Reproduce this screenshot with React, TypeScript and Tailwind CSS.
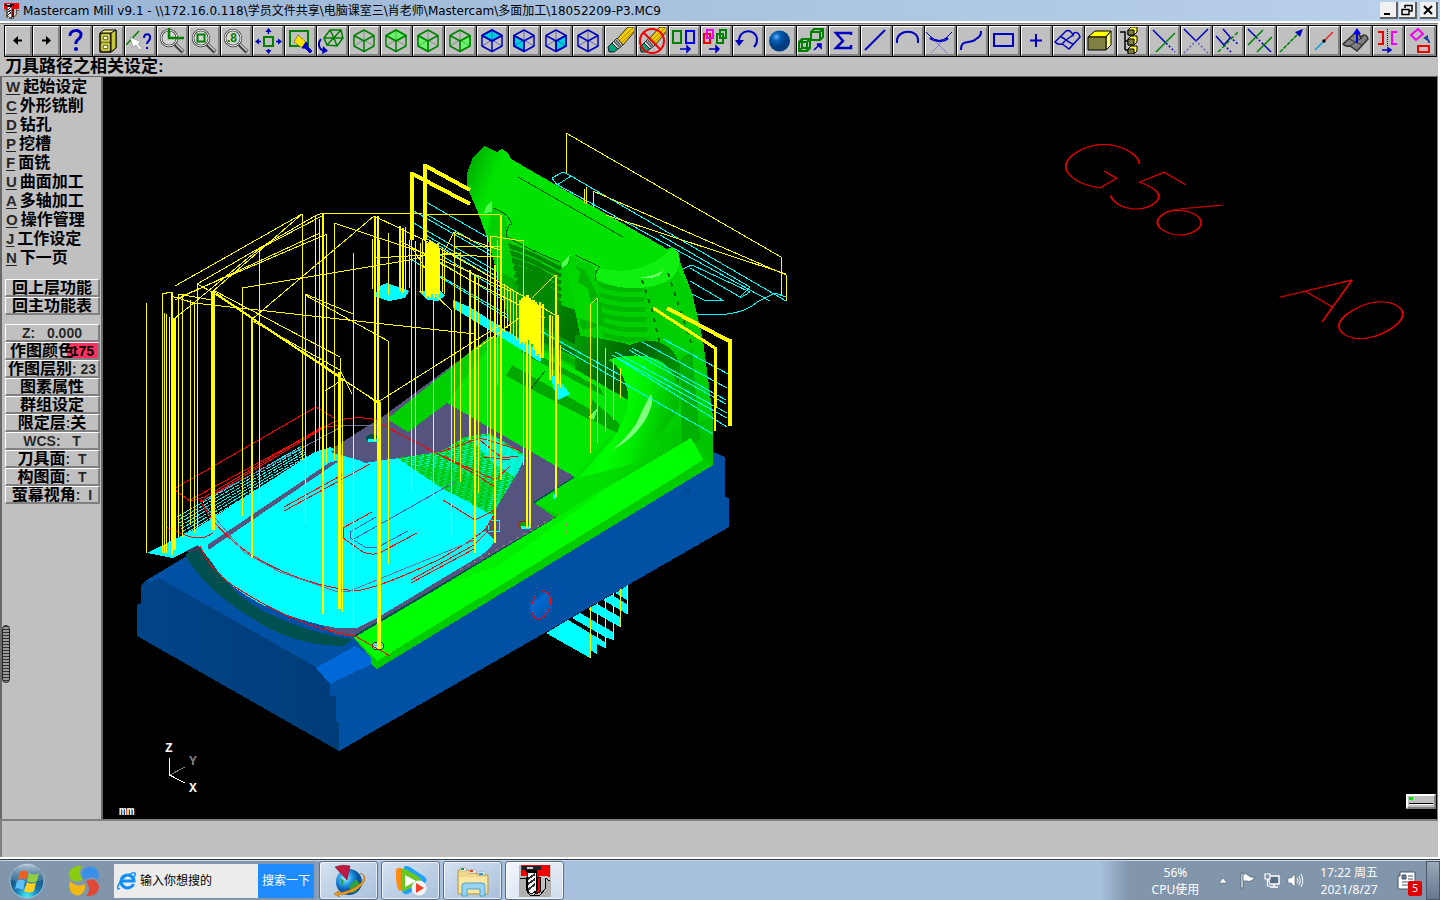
import type { ReactNode } from "react";

const CJK = "font-['Noto_Sans','Noto_Sans_CJK_SC',sans-serif]";
const BLUE = "#0000c0";
const GREEN = "#008000";

/* ---------- toolbar icons, drawn on a 31 x 30 grid ---------- */

function Cube({ color, face, fill }: { color: string; face?: "top" | "front" | "side"; fill?: string }) {
  const edge = face && color === GREEN ? "#20d020" : color;
  return (
    <g stroke={color} strokeWidth="1.5" fill="none" strokeLinejoin="round">
      {face === "top" && <path d="M15 4 25 9.500 15 15 5 9.500Z" fill={fill} stroke={edge} />}
      {face === "front" && <path d="M5 9.500 15 15V25L5 20Z" fill={fill} stroke={edge} />}
      {face === "side" && <path d="M25 9.500 15 15V25L25 20Z" fill={fill} stroke={edge} />}
      <path d="M5 20 15 14 25 20M15 5V14" strokeWidth="1" opacity=".45" />
      <path d="M15 4 25 9.500V20L15 25.500 5 20V9.500ZM5 9.500 15 15 25 9.500M15 15V25.500" />
    </g>
  );
}

function Lens({ children }: { children?: ReactNode }) {
  return (
    <g>
      <path d="M18 18 26 26" stroke="#404040" strokeWidth="4" />
      <path d="M18 17 26 25" stroke="#d8d8d8" strokeWidth="1.500" />
      <circle cx="12" cy="12" r="8" fill="#d6d6d6" stroke="#404040" strokeWidth="2.500" />
      <circle cx="12" cy="12" r="8" fill="none" stroke="#f4f4f4" strokeWidth="1" />
      {children}
    </g>
  );
}

function Eraser() {
  return (
    <g stroke="#000" strokeWidth=".8">
      <path d="M12 13 23 1H30V5L18 19Z" fill="#f8d000" />
      <path d="M14 15 28 2M16 17 30 4" stroke="#907000" fill="none" />
      <path d="M7 17 12 12 18 19 13 23Z" fill="#e0e0e0" />
      <path d="M9 15 15 22M11 14 16 20" fill="none" stroke="#555" strokeWidth="1.500" />
      <path d="M3 21 7 17 13 23 9 26H4Z" fill="#00a080" />
    </g>
  );
}

const Arrow = ({ d }: { d: string }) => <path d={d} fill={BLUE} stroke={BLUE} strokeWidth="1.500" />;

const ICONS: [string, ReactNode][] = [
  ["Help", <g key="a"><path d="M9 10C8 3 21 3 20 9 20 14 14 13 15 18" fill="none" stroke={BLUE} strokeWidth="3" /><circle cx="15" cy="23" r="2" fill={BLUE} /></g>],
  ["File", <g key="a" stroke="#000"><path d="M7 7 11 4H23V22L18 26H7Z" fill="#f4f080" /><path d="M7 7H18V26H7Z" fill="#808000" /><path d="M18 7V26L23 22V4Z" fill="#c8c840" /><path d="M9 9H16V15H9ZM9 18H16V24H9Z" fill="#808000" stroke="#f8f8a0" /><path d="M11 12H14M11 21H14" stroke="#fff" strokeWidth="2" /></g>],
  ["Analyze", <g key="a" fill="none"><path d="M1 19 14 5" stroke={GREEN} strokeWidth="1.500" /><path d="M5 11 16 16 13 18 17 22 15 24 11 19 8 21Z" fill="#fff" stroke="#777" strokeWidth=".5" /><path d="M19 12C19 7 26 7 25 12 25 15 22 15 22 18M22 21V23" stroke={BLUE} strokeWidth="2" /></g>],
  ["Zoom screen", <Lens key="a"><path d="M12 2V12H27" fill="none" stroke={GREEN} strokeWidth="2.500" /></Lens>],
  ["Zoom window", <Lens key="a"><path d="M8.500 8.500H15.500V15.500H8.500Z" fill="none" stroke={GREEN} strokeWidth="2" /></Lens>],
  ["Zoom 0.8", <Lens key="a"><text x="6" y="16" fontSize="12" fontWeight="700" fill={GREEN} fontFamily="Liberation Sans">.8</text></Lens>],
  ["Fit", <g key="a"><path d="M11 11H20V20H11Z" fill="none" stroke={GREEN} strokeWidth="2" /><path d="M15.500 8V5M15.500 23V26M8 15.500H5M23 15.500H26" stroke={BLUE} strokeWidth="1.500" /><path d="M12.500 6 15.500 2 18.500 6ZM12.500 24 15.500 28 18.500 24ZM6 12.500 2 15.500 6 18.500ZM25 12.500 29 15.500 25 18.500Z" fill={BLUE} /></g>],
  ["Repaint", <g key="a"><path d="M5 5H23V20H5Z" fill="none" stroke={GREEN} strokeWidth="2" /><path d="M13 9 22 17 17 22 9 16Z" fill="#f8e000" stroke="#605000" strokeDasharray="1 1" /><path d="M21 16 23 18 22 20 27 25 25 27 20 22 17 22Z" fill="#0000e0" stroke="#0000a0" /></g>],
  ["Rotate view", <g key="a" fill="none"><path d="M7 12 13 4 24 4 26 12 20 20 10 19ZM7 12 17 12 26 12M17 12 13 4M17 12 20 20M10 19 24 4" stroke={GREEN} strokeWidth="1.500" /><path d="M4 13C0 18 2 24 8 25" stroke={BLUE} strokeWidth="2" /><path d="M6 20 11 25 5 28Z" fill={BLUE} /></g>],
  ["View isometric", <Cube key="a" color={GREEN} />],
  ["View top", <Cube key="a" color={GREEN} face="top" fill="#70f070" />],
  ["View front", <Cube key="a" color={GREEN} face="front" fill="#70f070" />],
  ["View side", <Cube key="a" color={GREEN} face="side" fill="#70f070" />],
  ["Plane top", <Cube key="a" color={BLUE} face="top" fill="#00d0d8" />],
  ["Plane front", <Cube key="a" color={BLUE} face="front" fill="#00d0d8" />],
  ["Plane side", <Cube key="a" color={BLUE} face="side" fill="#00d0d8" />],
  ["Plane 3D", <Cube key="a" color={BLUE} />],
  ["Delete", <Eraser key="a" />],
  ["Undelete", <g key="a"><Eraser /><circle cx="15" cy="15" r="12" fill="none" stroke="#f00000" strokeWidth="2" /><path d="M7 7 23 23" stroke="#f00000" strokeWidth="2" /></g>],
  ["Clear colors", <g key="a" fill="none" strokeWidth="2"><path d="M4 5H12V17H4Z" stroke={GREEN} /><path d="M17 5H25V17H17Z" stroke="#0000ff" /><Arrow d="M11 23H18V20L21 23 18 26V23" /></g>],
  ["Screen attributes", <g key="a" fill="none" strokeWidth="2"><path d="M3 8H9V17H3Z" stroke="#f00000" /><path d="M6 4H12V12H6Z" stroke="#f000f0" /><path d="M16 8H22V17H16ZM19 4H25V12H19Z" stroke={GREEN} /><Arrow d="M8 23H15V20L18 23 15 26V23" /></g>],
  ["Undo", <g key="a"><path d="M6 16C5 2 24 2 24 14 24 17 23 19 21 21" fill="none" stroke={BLUE} strokeWidth="2" /><path d="M2 14H11L6 20Z" fill={BLUE} /></g>],
  ["Shade", <g key="a"><defs><radialGradient id="ball" cx=".35" cy=".3"><stop offset="0" stopColor="#60b0f0" /><stop offset=".4" stopColor="#0860b8" /><stop offset="1" stopColor="#003c80" /></radialGradient></defs><circle cx="14.500" cy="15" r="10.500" fill="url(#ball)" /></g>],
  ["Transform", <g key="a"><path d="M14 6 17 3H26V11L23 14H14ZM14 6H23L26 3M23 6V14M2 16 5 13H13V22L10 25H2ZM2 16H10L13 13M10 16V25M5 13V22H13M5 22 2 25" fill="none" stroke={GREEN} strokeWidth="2" /><Arrow d="M17 24 22 19 20 18H24V22L22 20" /></g>],
  ["Sum", <path key="a" d="M22 9V7H7L14 15 7 22H22V19" fill="none" stroke={BLUE} strokeWidth="2.500" />],
  ["Line", <path key="a" d="M4 24 24 4" stroke={BLUE} strokeWidth="2" />],
  ["Arc", <path key="a" d="M4 17V14C5 3 25 3 25 14V17" fill="none" stroke={BLUE} strokeWidth="2" />],
  ["Fillet", <g key="a" fill="none"><path d="M1 6 5 10 C11 16 18 16 23 10L27 6" stroke={BLUE} strokeWidth="1" /><path d="M5 12C11 16 18 16 23 12" stroke={BLUE} strokeWidth="2.500" /><path d="M6 27 21 12M22 27 7 12" stroke="#5050d0" strokeWidth=".8" strokeDasharray="2 1" /></g>],
  ["Spline", <path key="a" d="M4 24C4 12 13 19 19 13 24 10 24 8 24 5" fill="none" stroke={BLUE} strokeWidth="2" />],
  ["Rectangle", <path key="a" d="M5 8H24V20H5Z" fill="none" stroke={BLUE} strokeWidth="2" />],
  ["Point", <path key="a" d="M9 14.500H21M15 8V21" stroke={BLUE} strokeWidth="2" />],
  ["Surface", <path key="a" d="M2 16 13 5C17 3 19 7 20 9 21 5 26 6 27 11L16 23 12 20 9 18C6 19 4 18 2 16ZM8 11C12 12 14 16 20 18M13 14 20 9M9 18 13 14" fill="none" stroke={BLUE} strokeWidth="1.500" />],
  ["Solid", <g key="a" stroke="#000"><path d="M3 11 10 5H26L21 11Z" fill="#ffff00" /><path d="M21 11 26 5V19L21 24Z" fill="#ffff80" /><path d="M3 11H21V24H3Z" fill="#808040" /></g>],
  ["Solids manager", <g key="a" stroke="#000"><path d="M3 6H8V24M8 15H11M8 24H11" fill="none" strokeWidth="1.500" /><path d="M11 4 14 1H20V6L17 9H11ZM11 13 14 10H20V16L17 19H11ZM11 23 14 20H20V25L18 27H11Z" fill="#ffff40" /><path d="M11 4H17V9H11ZM11 13H17V19H11ZM11 23H17V28H11Z" fill="#808040" /></g>],
  ["Trim one", <g key="a" strokeWidth="1.500"><path d="M4 4 17 17" stroke={BLUE} /><path d="M17 17 26 26" stroke={BLUE} strokeDasharray="2 2" /><path d="M7 26 26 7" stroke={GREEN} /></g>],
  ["Trim two", <g key="a" fill="none" strokeWidth="1.500"><path d="M3 3 15 15 27 3" stroke={BLUE} /><path d="M3 27 15 15 27 27" stroke="#6060c0" strokeDasharray="2 2" /></g>],
  ["Trim three", <g key="a" fill="none" strokeWidth="1.500"><path d="M3 10 11 19 17 12M10 3 17 11" stroke={BLUE} /><path d="M11 19 19 27M17 11 26 19" stroke={BLUE} strokeDasharray="2 2" /><path d="M5 26 26 5" stroke={GREEN} strokeDasharray="4 2" /></g>],
  ["Divide", <g key="a" strokeWidth="1.500"><path d="M3 3 11 11M18 18 26 26" stroke={BLUE} /><path d="M11 11 18 18" stroke={BLUE} strokeDasharray="2 2" /><path d="M3 19 18 4M12 26 27 11" stroke={GREEN} /></g>],
  ["Extend", <g key="a"><path d="M3 26 21 8" stroke={GREEN} strokeWidth="1.500" strokeDasharray="4 1" /><path d="M18 6 26 3 23 11Z" fill={BLUE} /></g>],
  ["Break", <g key="a"><path d="M6 24 15 15" stroke="#00a0d8" strokeWidth="1.500" /><path d="M15 15 24 6" stroke="#f02020" strokeWidth="1.500" /><circle cx="15" cy="15" r="1.700" /></g>],
  ["Normal", <g key="a"><path d="M2 18 13 8C17 6 19 9 20 12 22 7 26 9 27 13L16 25 12 22 9 20C6 21 4 20 2 18Z" fill="#808080" stroke="#303030" strokeWidth="1.500" /><path d="M8 13 21 19M9 20 20 12" stroke="#303030" /><path d="M16 17V7" stroke="#0000f0" strokeWidth="2" /><path d="M12 8 16 2 20 8Z" fill="#0000f0" /></g>],
  ["Mirror", <g key="a" fill="none"><path d="M5 6H10V18H5" stroke="#f00000" strokeWidth="2" /><path d="M24 6H19V18H24" stroke="#f000f0" strokeWidth="2" /><path d="M14.500 3V20" stroke={BLUE} strokeWidth="1" strokeDasharray="1 1" /><Arrow d="M9 24H15V22L18 24 15 26V24" /></g>],
  ["Rotate", <g key="a" fill="none"><path d="M6 9 13 3 18 8 11 14Z" stroke="#f000f0" strokeWidth="2" /><path d="M13 20H24V26H13Z" stroke="#f00000" strokeWidth="2" /><path d="M24 17C24 14 22 12 20 12" stroke="#2040a0" strokeWidth="2" /><path d="M18 12 23 9V15Z" fill="#2040a0" /></g>],
];

function ToolButton({ label, wide, children }: { label: string; wide: boolean; children: ReactNode }) {
  return (
    <button
      aria-label={label}
      className={`h-[30px] shrink-0 overflow-hidden border-r-2 border-b-2 border-t border-l border-t-white border-l-white border-r-[#808080] border-b-[#808080] bg-[#c0c0c0] ${wide ? "w-[31px]" : "w-[27px]"}`}
    >
      {children}
    </button>
  );
}

function Toolbar() {
  return (
    <nav className="ml-1 mt-[2px] flex w-fit max-w-full gap-px overflow-hidden bg-black p-px">
      <ToolButton label="Previous" wide={false}>
        <svg viewBox="0 0 24 27" className="h-full w-full"><path d="M8 13.500H16" stroke="#000" strokeWidth="2" /><path d="M7 13.500 12 9V18Z" /></svg>
      </ToolButton>
      <ToolButton label="Next" wide={false}>
        <svg viewBox="0 0 24 27" className="h-full w-full"><path d="M8 13.500H16" stroke="#000" strokeWidth="2" /><path d="M17 13.500 12 9V18Z" /></svg>
      </ToolButton>
      {ICONS.map(([label, icon]) => (
        <ToolButton key={label} label={label} wide>
          <svg viewBox="1 1 28 27" className="h-full w-full">{icon}</svg>
        </ToolButton>
      ))}
    </nav>
  );
}

/* ---------- left menu ---------- */

const MENU = [
  ["W", "起始设定"], ["C", "外形铣削"], ["D", "钻孔"], ["P", "挖槽"], ["F", "面铣"],
  ["U", "曲面加工"], ["A", "多轴加工"], ["O", "操作管理"], ["J", "工作设定"], ["N", "下一页"],
];

const SETTINGS = ["Z:   0.000", "作图颜色:", "作图层别: 23", "图素属性", "群组设定", "限定层:关", "WCS:   T", "刀具面:  T", "构图面:  T", "萤幕视角:  I"];

/* Latin runs are set a size smaller than the Chinese ones */
function Mixed({ text }: { text: string }) {
  return (
    <>
      {text.split(/([\x20-\x7f]+)/).filter(Boolean).map((run) =>
        run.charCodeAt(0) < 128 ? <span key={run} className="text-[14px] font-bold opacity-80">{run}</span> : <span key={run}>{run}</span>,
      )}
    </>
  );
}

function MenuButton({ text }: { text: string }) {
  const colour = text === "作图颜色:";
  return (
    <button
      className={`relative flex h-[18px] w-full items-center overflow-hidden whitespace-pre border-r-2 border-b-2 border-t border-l border-t-white border-l-white border-r-[#808080] border-b-[#808080] text-[16px] leading-none ${colour ? "pl-1" : "justify-center"}`}
    >
      {colour && <span className="absolute right-0 top-0 flex h-full w-[31px] items-center justify-end bg-[#ff3060] pr-1 text-[14px]">175</span>}
      <span className="relative flex items-center">
        <Mixed text={text} />
      </span>
    </button>
  );
}

function SideMenu() {
  return (
    <aside className="relative flex w-[103px] shrink-0 flex-col border-l-2 border-r-2 border-[#696969] pr-px font-['Liberation_Sans','Noto_Sans_CJK_SC',sans-serif] font-bold">
      <ul className="pl-1">
        {MENU.map(([key, label]) => (
          <li key={key}>
            <button className="flex h-[19px] items-center gap-[3px] whitespace-nowrap text-[16px] leading-[19px]">
              <span className="text-[15px] underline underline-offset-2 opacity-80">{key}</span>
              <span>{label}</span>
            </button>
          </li>
        ))}
      </ul>
      <div className="mt-3 flex flex-col pl-[3px]">
        <MenuButton text="回上层功能" />
        <MenuButton text="回主功能表" />
      </div>
      <div className="mt-[9px] flex flex-col pl-[3px]">
        {SETTINGS.map((s) => <MenuButton key={s} text={s} />)}
      </div>
      <div className="absolute left-0 top-[548px] h-[58px] w-2 rounded border border-[#222] bg-[repeating-linear-gradient(#333_0_1px,#999_1px_3px)]" />
    </aside>
  );
}

/* ---------- model view ---------- */

/* x, top, bottom, width of each vertical rapid move */
const RAPIDS = [
  [146, 303, 553, 1], [162, 294, 553, 1], [164, 313, 553, 1], [166, 314, 553, 1], [169, 317, 553, 1], [171, 292, 555, 2],
  [174, 318, 550, 3], [178, 294, 537, 1], [182, 296, 537, 1], [190, 300, 525, 1], [194, 303, 533, 1], [197, 284, 533, 1],
  [212, 292, 530, 4], [242, 288, 516, 1], [251, 320, 558, 2], [259, 249, 502, 1], [302, 214, 460, 1], [305, 295, 523, 1],
  [315, 216, 455, 1], [319, 219, 455, 1], [322, 213, 614, 2], [326, 234, 463, 1], [334, 223, 460, 1], [339, 372, 609, 3],
  [342, 380, 612, 1], [340, 358, 380, 1], [353, 253, 625, 1], [374, 216, 441, 2], [377, 216, 404, 2], [378, 402, 649, 4],
  [388, 341, 564, 1], [388, 233, 295, 1], [372, 239, 289, 1], [379, 240, 290, 1], [399, 226, 291, 2], [402, 228, 293, 2], [405, 227, 292, 1],
  [409, 240, 288, 1], [411, 172, 240, 4], [424, 164, 240, 4], [411, 240, 491, 1], [415, 241, 472, 1], [433, 300, 500, 1], [451, 310, 535, 1],
  [454, 232, 463, 1], [460, 252, 482, 1], [469, 270, 440, 2], [474, 275, 553, 2], [478, 278, 493, 1], [487, 235, 452, 1],
  [490, 236, 458, 1], [494, 265, 543, 2], [500, 215, 480, 2], [497, 240, 385, 1], [523, 240, 465, 1], [526, 295, 528, 2],
  [529, 300, 528, 2], [555, 275, 497, 2], [549, 315, 380, 2], [552, 316, 376, 1], [557, 315, 384, 2], [560, 345, 388, 1],
  [590, 305, 453, 1], [597, 298, 443, 1], [605, 348, 432, 1], [613, 358, 420, 1], [620, 368, 398, 1],
  [566, 133, 173, 1], [584, 189, 203, 1], [586, 187, 204, 1], [593, 191, 208, 1], [781, 257, 295, 1], [786, 275, 301, 1],
  [729, 339, 426, 4], [715, 347, 408, 3], [714, 405, 431, 2],
  [590, 607, 658, 1], [597, 603, 640, 1], [605, 598, 648, 1], [613, 593, 640, 1], [620, 589, 627, 1], [627, 585, 614, 1],
];

const CLUSTER_A = [[420, 243, 292], [422, 240, 294], [425, 241, 298], [427, 243, 296], [429, 240, 298], [431, 242, 294], [433, 243, 298], [435, 244, 294], [437, 243, 296], [439, 248, 294], [442, 248, 292], [444, 252, 294]];
const CLUSTER_B = [[504, 284, 332], [507, 287, 328], [510, 288, 334], [513, 290, 336], [516, 293, 340], [519, 300, 344], [521, 298, 342], [523, 296, 344], [525, 298, 342], [527, 295, 340], [529, 298, 346], [531, 300, 344], [533, 300, 350], [535, 302, 356], [537, 305, 354], [539, 302, 358], [542, 304, 358]];

const YELLOW_LINES =
  "M175 286 302 214M197 284 315 216 322 213H344L500 215M182 296 327 234M178 294 212 300M212 292 302 214M174 319 190 306 259 249 322 216M175 300 320 233M162 294 171 292M171 296 194 303 475 334M197 284 212 292 340 378 378 402 500 325M213 290 340 357M213 291 378 403M216 294 338 375M242 288 410 260 430 254 500 257M251 320 374 216M374 216 399 228 430 243 470 265 555 315M334 223 430 255 470 272 510 291M305 294 353 314M305 295 388 341M251 320 340 370 352 394M325 391 342 380M374 258 460 253M399 240 470 280 545 318M411 246 425 268M445 250 454 232 470 239M454 246 500 246M430 290 451 310M490 236 523 241M532 298 555 275M590 305 597 298M475 350 530 310M566 133 781 257M593 191 786 275M606 215 786 274M470 240 500 250";

function Slats() {
  const left = [0, 1, 2, 3, 4, 5, 6].map((i) => (
    <path key={`l${i}`} d={`M${508 + i * 2} ${243 + i * 7}q12 4 26 10l${28 - i * 2} ${14}-2 4q-28-16-${50 - i}-22z`} fill="#008800" />
  ));
  const right = [0, 1, 2, 3, 4, 5, 6].map((i) => (
    <path key={`r${i}`} d={`M${598 + i} ${282 + i * 10}q22 7 46 5l-1 5q-26 2-44-5z`} fill="#00b800" />
  ));
  const lower = [0, 1, 2, 3, 4].map((i) => (
    <path key={`b${i}`} d={`M${510 + i * 7} ${368 - i * 11}l90 50 2 6-96-50z`} fill="#00a800" opacity=".8" />
  ));
  return <g>{left}{right}{lower}</g>;
}

function Model() {
  return (
    <svg viewBox="103 77 1334 742" preserveAspectRatio="xMinYMin meet" className="absolute inset-0 h-full w-full" shapeRendering="crispEdges" role="img" aria-label="Tool paths over the shaded part">
      <defs>
        <linearGradient id="bodyShade" x1="0" y1="0" x2="1" y2=".6">
          <stop offset="0" stopColor="#00a000" /><stop offset=".12" stopColor="#00e400" /><stop offset=".8" stopColor="#00e000" /><stop offset="1" stopColor="#00c400" />
        </linearGradient>
        <linearGradient id="cavity" x1="0" y1="0" x2="1" y2="1">
          <stop offset="0" stopColor="#00c000" /><stop offset=".5" stopColor="#008000" /><stop offset="1" stopColor="#006000" />
        </linearGradient>
        <linearGradient id="hollow" x1="0" y1="0" x2="1" y2=".6">
          <stop offset="0" stopColor="#00a000" /><stop offset=".5" stopColor="#006000" /><stop offset="1" stopColor="#00a800" />
        </linearGradient>
        <linearGradient id="sweep" x1="0" y1="0" x2="1" y2=".35">
          <stop offset="0" stopColor="#00e000" /><stop offset=".5" stopColor="#00ff00" /><stop offset=".7" stopColor="#00ec00" /><stop offset="1" stopColor="#00b800" />
        </linearGradient>
        <linearGradient id="leftFace" x1="0" y1="0" x2="1" y2="0"><stop offset="0" stopColor="#004488" /><stop offset="1" stopColor="#003c78" /></linearGradient>
        <linearGradient id="bore" x1="0" y1="0" x2="1" y2="1"><stop offset="0" stopColor="#003468" /><stop offset=".35" stopColor="#0068d0" /><stop offset="1" stopColor="#0054a8" /></linearGradient>
        <pattern id="mesh" width="7" height="4" patternUnits="userSpaceOnUse" patternTransform="rotate(12)">
          <rect width="7" height="4" fill="#00c800" /><rect width="5" height="1" fill="#00ffff" /><rect x="2" y="2" width="4" height="1" fill="#00ffff" />
        </pattern>
      </defs>

      {/* engraved labels on the X/Y plane */}
      <g fill="#ff0000" stroke="#ff0000" strokeWidth=".4" fontFamily="Lato" className="font-thin" fontSize="84" shapeRendering="auto">
        <text transform="matrix(.866 .5 -.866 .5 1047 163)">G56</text>
        <text transform="matrix(.866 .5 -.866 .5 1278 296)">A0</text>
      </g>

      {/* wire paths behind the part */}
      <g fill="none" stroke="#00ffff">
        <path d="M426 202 520 256M412 210 520 272M424 213 520 268M412 222 520 285M424 234 530 296M424 237 530 300M432 250 540 314M440 262 540 322M430 270 540 334M412 260 540 338" />
        <path d="M552 178 563 172 571 176 557 185ZM571 176 786 301M556 184 770 301M660 235 750 287 740 297 690 268M680 270 692 265 750 292 740 298M690 293 704 300 724 301 690 281M697 314Q740 318 757 302L775 293 786 297" />
      </g>

      {/* fixture block */}
      <path d="M137 636V605L141 603V585L147 580 200 548 690 440 713 452 725 457V497L729 498V527L339 751Z" fill="#0050a4" />
      <path d="M137 636V605L141 603V585L147 580 150 583 159 578 316 667 330 684V695L336 697V722H339V751Z" fill="url(#leftFace)" />
      <path d="M316 668 355 646 372 658V664L330 684Z" fill="#0068d8" />
      <path d="M683 491 690 487V493Z" fill="#004890" />
      <ellipse cx="541" cy="605" rx="11" ry="14" fill="url(#bore)" transform="rotate(15 541 605)" />
      <ellipse cx="541" cy="605" rx="9" ry="14" fill="none" stroke="#ff0000" strokeDasharray="44 6" transform="rotate(18 541 605)" />

      {/* part base */}
      <path d="M353 637 556 518 534 503 575 477 600 440 713 417V465L377 669 371 664V658Z" fill="#00cc00" />
      <path d="M353 637 560 516 691 438 703 460 377 661 371 655Z" fill="#00ff00" />
      <path d="M330 450 385 415 489 338 500 350 447 403 575 477 534 503 556 518 353 637 335 634 200 547Z" fill="#54547f" />
      <path d="M387 419 489 337 620 330 640 440 575 477 447 403 408 432Z" fill="#00d000" />
      <path d="M470 416 447 403 490 345 540 340 620 400 660 440 600 475 575 477Z" fill="#00e600" />
      <path d="M556 518 353 637M534 503 575 477" stroke="#005050" strokeWidth="2" />

      {/* tall body */}
      <path d="M485 146 497 152 502 149 508 153 511 159 667 249 672 247 679 253 680 262 692 293 703 340 713 417V465L691 438 560 516 535 503 575 477 489 425 470 410 490 340 512 330 497 273 487 237 477 210 467 187V173L473 157Z" fill="url(#bodyShade)" />
      <path d="M493 208Q510 217 507 235 540 255 560 262L570 255 595 267 597 280Q640 290 673 263L692 293 713 417 640 440 560 390 512 335 497 273 487 237Z" fill="#00d000" />
      <path d="M496 270Q520 280 545 300L575 310 582 345 600 370 560 350 512 335Z" fill="url(#cavity)" />
      <path d="M566 262 585 270 600 300 605 325 582 330 575 300Z" fill="#00b400" />
      <Slats />
      <path d="M566 266 572 262 580 272 578 282 588 288 590 300 598 304V324L578 318 570 290Z" fill="#00d800" />
      <path d="M575 335Q615 340 630 345 670 330 682 370L670 420 640 440 600 425 575 370Z" fill="url(#hollow)" />
      <path d="M490 345 512 335 580 372 628 400V425L610 435 575 477 447 403Z" fill="#00e800" />
      <path d="M512 365 595 412 590 420 506 376ZM526 348 600 388 604 396 520 352ZM592 400 620 424 617 433 590 419Z" fill="#00a800" />
      <path d="M608 360Q640 350 662 362 684 378 678 410L640 462 578 478 612 440Q634 410 626 385 620 365 608 360Z" fill="url(#sweep)" />
      <path d="M644 422Q655 404 651 394 646 402 636 424 625 440 612 450 632 440 644 422Z" fill="#80ff80" shapeRendering="auto" />
      <path d="M680 360 692 350 700 440 682 450Z" fill="#00b000" />
      <path d="M595 267Q640 280 672 248L679 253Q684 285 640 288 620 290 597 280Z" fill="#10f010" />
      <path d="M640 277Q655 277 664 269L660 275Q650 280 640 277Z" fill="#70ff70" />
      <path d="M486 206 492 200V212L484 213ZM562 262 570 254 568 264 562 268Z" fill="#50ff50" />
      <path d="M588 417 598 408 594 420Z" fill="#60ff60" />
      <path d="M518 177 623 237M493 208Q510 214 512 225M512 223Q505 228 507 237 530 250 560 262M575 255 600 267Q594 272 596 281M545 371 530 390" fill="none" stroke="#005c00" />
      <path d="M642 280 652 310 660 345M668 273 680 310 692 345" fill="none" stroke="#006c00" strokeWidth="2" strokeDasharray="4 6" />
      <path d="M560 516 691 438 703 460 480 598Z" fill="#00ff00" />
      <path d="M440 587 620 479 500 565Z" fill="#00f000" />

      {/* front rim */}
      <path d="M185 555 195 546 202 548Q225 590 263 611 310 634 353 639L343 646Q300 646 263 625 205 592 185 555Z" fill="#005050" />
      <path d="M175 553 197 544 205 549 190 552Z" fill="#3a3a58" />

      {/* surface finishing passes */}
      <path d="M147 553 173 558 198 545Q212 562 217 570 230 588 263 605 300 622 337 628H357L377 618 473 560Q492 550 494 540L484 530 495 515 440 487 397 458 365 463 330 447 313 453 197 528Z" fill="#00ffff" />
      <path d="M397 458 440 452 465 437 490 433 525 455 518 472 492 515 440 487Z" fill="url(#mesh)" />
      <path d="M470 440 490 435 525 458 515 477 496 465Z" fill="#00ffff" opacity=".75" />
      <path d="M408 465 450 470 495 485 488 510 445 490Z" fill="#00c800" opacity=".45" />
      <path d="M208 545 330 463 338 461 209 549Z" fill="#54547f" stroke="#54547f" />
      <path d="M330 452 345 445 400 458 365 462Z" fill="#54547f" />
      <g stroke="#00ffff" strokeWidth="1">
        {[0, 1, 2, 3, 4, 5, 6, 7].map((i) => (
          <path key={i} d={`M${177 + i} ${517 + i * 3}L${302 + i} ${446 + i * 2}`} strokeDasharray="5 1" />
        ))}
      </g>
      <path d="M546 633 568 620 605 642V648L597 644V654L590 650V658ZM572 618 580 613 613 632V640L605 637ZM588 609 597 604 620 617V627ZM603 600 612 595 627 604V614ZM615 593 627 586V600Z" fill="#00ffff" />
      <path d="M377 287 387 283 409 291 405 298 389 301 376 297ZM419 291 440 290 445 296 438 301 427 300ZM453 300 470 307 543 354 540 362 525 352 453 308ZM549 374 558 378 570 394 558 400Z" fill="#00ffff" />
      <path d="M663 339 730 375M642 342 727 388M632 348 726 400M629 350 726 404M615 352 727 413M617 358 727 427M612 355 727 418M560 347 713 434M530 325 620 375" fill="none" stroke="#00ffff" />
      <path d="M488 520H499V531H488Z" fill="none" stroke="#00ffff" />

      {/* drilled holes */}
      <g><ellipse cx="373" cy="438" rx="7" ry="4" fill="#005050" /><path d="M368 440H378" stroke="#00ffff" strokeWidth="3" /></g>
      <g><ellipse cx="525" cy="525" rx="7" ry="4" fill="#00a000" stroke="#a02020" /><path d="M521 527H530" stroke="#00ffff" strokeWidth="3" /></g>
      <ellipse cx="378" cy="646" rx="6" ry="4" fill="#60d8e0" stroke="#004000" />
      <path d="M553 494H556V499H553Z" fill="#00ffff" />

      {/* contour paths */}
      <g fill="none" stroke="#ff0000">
        <path d="M172 490 316 407 334 418M175 490 190 501 205 497 322 427Q350 424 385 426L470 471 495 487 494 515 485 530Q465 545 440 559 380 588 355 591 300 585 250 554 215 530 200 500" />
        <path d="M190 500 322 428M201 502 330 424Q350 414 378 420M443 500 475 520 495 510" />
        <path d="M200 546Q210 572 240 590 300 628 355 636L390 656" strokeWidth="1" />
        <path d="M166 527 185 535Q200 542 213 533M284 507 342 475M284 511 370 464M411 580 474 545 494 525M411 583 474 549M372 512 343 528V538L363 552Q375 557 385 550L417 533" />
        <path d="M440 452 480 438 520 450M480 440 502 458 518 456M440 455 495 480 510 466M484 457 510 460" />
      </g>
      <path d="M354 539 455 482M376 517 350 532V538L365 547H378L408 531" fill="none" stroke="#4a5ca8" />
      <path d="M204 505 245 553 280 572 335 591H350L475 540M204 500 345 425H380" fill="none" stroke="#7070a0" />
      <path d="M566 523V533M573 525V534M460 570 560 514" fill="none" stroke="#a08060" strokeDasharray="3 5" />

      {/* rapid moves */}
      <g fill="#ffff00">
        {RAPIDS.map(([x, a, b, w]) => <rect key={`${x}-${a}`} x={w > 2 ? x - 1 : x} y={a} width={w} height={b - a} />)}
        {CLUSTER_A.map(([x, a, b]) => <rect key={x} x={x} y={a} width={x > 423 && x < 438 ? 2 : 1} height={b - a} />)}
        {CLUSTER_B.map(([x, a, b]) => <rect key={x} x={x} y={a} width={x > 517 ? 2 : 1} height={b - a} />)}
      </g>
      <path d={YELLOW_LINES} fill="none" stroke="#ffff00" />
      <path d="M411 173 470 204M424 165 470 190M667 308 729 341" stroke="#ffff00" strokeWidth="4" />
      <path d="M653 308 715 348" stroke="#ffff00" strokeWidth="3" />

      {/* axis marker and units */}
      <path d="M169.500 758V775L185 783" fill="none" stroke="#ffffff" />
      <path d="M170 775 185 767" stroke="#808080" />
      <g fill="#ffffff" fontFamily="Liberation Mono" fontWeight="700" fontSize="13">
        <text x="165" y="752">Z</text>
        <text x="189" y="792">X</text>
        <text x="189" y="765" fill="#808080">Y</text>
        <text x="119" y="815">mm</text>
      </g>
    </svg>
  );
}

/* ---------- task bar ---------- */

function TaskButton({ label, active, children }: { label: string; active?: boolean; children: ReactNode }) {
  return (
    <button
      aria-label={label}
      className={`flex h-[39px] w-[59px] items-center justify-center rounded-[3px] border border-[#5c6f88] shadow-[inset_0_0_0_1px_rgba(255,255,255,0.7)] ${active ? "bg-gradient-to-br from-[#f4f8fc] to-[#cddcec]" : "bg-gradient-to-br from-[#d5e2f0] to-[#a9c0dc]"}`}
    >
      {children}
    </button>
  );
}

function MillIcon({ className }: { className: string }) {
  return (
    <svg viewBox="0 0 32 32" className={className} shapeRendering="crispEdges">
      <path d="M0 0H32V32H0Z" fill="#c0c0c0" />
      <path d="M2 0H31V12L26 11H21L17 14 14 11 2 11Z" fill="#f00000" />
      <path d="M0 13 7 11V26L11 30H21L26 24V13L32 16V32H0Z" fill="#b0b0b0" />
      <path d="M1 14 7 13V25L11 30H21L26 24V13L31 16" fill="none" stroke="#000" strokeWidth="1" />
      <path d="M8 7H17V26L13 29 8 26Z" fill="#f4f4f4" stroke="#000" strokeWidth="1" />
      <path d="M9 14 16 9M9 19 16 14M9 25 16 19" stroke="#303030" strokeWidth="2" />
      <path d="M3 1H22V5H3Z" fill="#202020" />
      <path d="M7 6H18" stroke="#000" strokeWidth="2" />
      <path d="M8 3H14" stroke="#d0d0d0" strokeWidth="2" />
      <path d="M18 12H21V27L16 29 18 25Z" fill="#f00000" stroke="#000" strokeWidth="1" />
    </svg>
  );
}

function StartOrb() {
  return (
    <svg viewBox="0 0 36 36" className="h-9 w-9">
      <defs>
        <radialGradient id="orb" cx=".5" cy=".95" r=".9"><stop offset="0" stopColor="#40f0ff" /><stop offset=".4" stopColor="#1878b0" /><stop offset="1" stopColor="#183c60" /></radialGradient>
        <linearGradient id="gloss" x1="0" y1="0" x2="0" y2="1"><stop offset="0" stopColor="#e0eef8" stopOpacity=".8" /><stop offset="1" stopColor="#80a8c8" stopOpacity=".25" /></linearGradient>
      </defs>
      <circle cx="18" cy="18" r="17" fill="url(#orb)" stroke="#a8c4d8" />
      <path d="M2 17A16 16 0 0 1 34 17Q18 22 2 17Z" fill="url(#gloss)" />
      <path d="M11 9Q15 6 19 9L17 17Q13 14 9 17Z" fill="#f06020" />
      <path d="M20 10Q25 13 30 10L28 18Q23 21 18 18Z" fill="#90d040" />
      <path d="M8 18Q12 15 16 18L14 27Q10 24 6 26Z" fill="#60c0f8" />
      <path d="M18 19Q22 22 27 19L25 28Q20 31 15 28Z" fill="#ffd020" />
    </svg>
  );
}

function CloverIcon() {
  return (
    <svg viewBox="0 0 32 32" className="h-8 w-8">
      <path d="M14 1C6 0 0 5 1 11 2 16 8 18 15 15 11 10 11 5 14 1Z" fill="#88cc10" />
      <path d="M14 7C17 0 27 0 30 6 31 9 31 12 30 15 26 11 21 12 17 15 14 13 13 10 14 7Z" fill="#3a90e8" />
      <path d="M2 16C0 22 2 28 7 30 13 32 18 27 17 19 11 22 6 20 2 16Z" fill="#f0b810" />
      <path d="M18 31C26 32 31 27 31 22 30 16 25 12 18 16 22 21 22 27 18 31Z" fill="#e04838" />
    </svg>
  );
}

function Taskbar() {
  return (
    <footer className={`flex h-10 shrink-0 items-center border-t border-[#c6d6e6] bg-[linear-gradient(90deg,#8195ab_0,#8195ab_310px,#a6c0dd_340px,#a6c0dd_calc(100%-340px),#8195ab_calc(100%-310px),#8195ab_100%)] text-[12px] ${CJK}`}>
      <button aria-label="Start" className="ml-[9px]"><StartOrb /></button>
      <button aria-label="Clover" className="ml-[23px]"><CloverIcon /></button>
      <form className="ml-[14px] flex h-[34px] w-[200px] bg-[#ececec]">
        <label htmlFor="search" className="flex w-6 shrink-0 items-center pl-[3px]">
          <svg viewBox="0 0 20 20" className="h-5 w-5" fill="none" stroke="#1090f8">
            <path d="M16.500 13A6.500 6.500 0 1 1 17 10H5" strokeWidth="3" />
            <path d="M3 17C-2 21 1 11 8 6 15 1 21 0 17 6" strokeWidth="1.500" />
          </svg>
        </label>
        <input id="search" defaultValue="输入你想搜的" className="w-[120px] min-w-0 bg-transparent pl-[2px] text-black outline-none" />
        <button type="button" className="h-full w-14 shrink-0 whitespace-nowrap bg-[#1e8cff] text-white">搜索一下</button>
      </form>
      <div className="ml-[5px] flex gap-[3px]">
        <TaskButton label="Globe">
          <svg viewBox="0 0 34 34" className="h-[34px] w-[34px]">
            <defs><radialGradient id="globe" cx=".35" cy=".35"><stop offset="0" stopColor="#a0f0ff" /><stop offset=".6" stopColor="#1890e0" /><stop offset="1" stopColor="#0850a0" /></radialGradient></defs>
            <circle cx="17" cy="18" r="13" fill="url(#globe)" />
            <path d="M17 22 24 15 28 20 24 28 19 29ZM8 14 12 17 10 22Z" fill="#30a040" />
            <path d="M28 9Q36 12 28 20 18 28 5 29L8 26 2 30 8 33 6 31Q22 30 30 21 37 12 28 9Z" fill="#f0a020" stroke="#b06808" strokeWidth=".6" />
            <path d="M3 3Q10 0 18 2L15 16Z" fill="#c01840" stroke="#801028" strokeWidth=".6" />
          </svg>
        </TaskButton>
        <TaskButton label="Video">
          <svg viewBox="0 0 34 34" className="h-[34px] w-[34px]">
            <path d="M10 3Q12 1 16 3L31 13Q34 16 31 19L14 30Q8 31 8 26Z" fill="#20a0f8" />
            <path d="M2 6Q3 3 7 4L10 6V25L6 27Q3 27 2 15Z" fill="#ff8c10" />
            <path d="M7 5Q10 4 13 6L25 13Q29 17 25 20L10 27Q7 27 7 24Z" fill="#68c820" />
            <path d="M11 11 22 17 11 23Z" fill="#fff" />
            <circle cx="25" cy="24" r="7.500" fill="#f4f4f4" /><path d="M22 19 30 24 22 29Z" fill="#f04028" />
          </svg>
        </TaskButton>
        <TaskButton label="Explorer">
          <svg viewBox="0 0 34 34" className="h-[34px] w-[34px]">
            <path d="M2 6H12L14 9H20L22 11H32V30H2Z" fill="#f0d888" stroke="#b89848" />
            <path d="M4 4H10V7H4ZM13 6H20V9H13ZM22 8H29V11H22Z" fill="#fff" stroke="#a0a0a0" strokeWidth=".6" />
            <path d="M5 4H8V6H5Z" fill="#10a030" /><path d="M14 6H17V8H14Z" fill="#e04020" /><path d="M23 9H27V11H23Z" fill="#3090e0" />
            <path d="M3 13H31V29H3Z" fill="#fae6a0" />
            <path d="M6 32V22Q6 19 9 19H26Q29 19 29 22V32H24V25H11V32Z" fill="#98d4f0" stroke="#50a0c8" />
          </svg>
        </TaskButton>
        <TaskButton label="Mastercam Mill" active><MillIcon className="h-8 w-8" /></TaskButton>
      </div>

      <div className="ml-auto flex h-full items-center text-white">
        <div className="text-center leading-[17px]">
          <p>56%</p>
          <p>CPU使用</p>
        </div>
        <button aria-label="Hidden icons" className="ml-5">
          <svg viewBox="0 0 8 6" className="h-[6px] w-2"><path d="M0 5 4 0 8 5Z" fill="#fff" stroke="#44546a" strokeWidth=".5" /></svg>
        </button>
        <button aria-label="Action center" className="ml-3">
          <svg viewBox="0 0 17 17" className="h-[17px] w-[17px]" stroke="#44546a" strokeWidth=".7" fill="#fff"><path d="M2 1H4V16H2Z" /><path d="M4 2Q7 1 9 3 11 6 16 5 14 8 12 9 10 10 8 9L4 9Z" /></svg>
        </button>
        <button aria-label="Network" className="ml-2">
          <svg viewBox="0 0 17 17" className="h-[17px] w-[17px]"><path d="M5 4H15V12H5Z" fill="#5a6e86" stroke="#fff" strokeWidth="1.500" /><path d="M6 15H14M10 12V15" stroke="#fff" strokeWidth="1.500" /><path d="M1 2H6V7H1ZM3.500 7V14H6" fill="#8195ab" stroke="#fff" strokeWidth="1.200" /></svg>
        </button>
        <button aria-label="Volume" className="ml-[6px]">
          <svg viewBox="0 0 17 17" className="h-[17px] w-[17px]"><path d="M1 6H4L8 2V15L4 11H1Z" fill="#fff" stroke="#44546a" strokeWidth=".5" /><path d="M10 6Q12 8.500 10 11M12 4Q15 8.500 12 13M14 2Q17.500 8.500 14 15" fill="none" stroke="#fff" /></svg>
        </button>
        <div className="ml-4 text-center leading-[17px]">
          <p>17:22 周五</p>
          <p>2021/8/27</p>
        </div>
        <button aria-label="News" className="relative ml-[18px]">
          <svg viewBox="0 0 22 20" className="h-5 w-[22px]"><path d="M4 1H19V18H2V5H4Z" fill="#fff" stroke="#44546a" /><path d="M6 4H10V8H6ZM12 5H17M12 8H17M6 11H17M6 14H17" fill="#6a7c92" stroke="#44546a" /></svg>
          <span className="absolute -bottom-[5px] -right-[4px] flex h-[15px] w-[14px] items-center justify-center rounded-[2px] bg-[#e00000] text-[10px] leading-none">5</span>
        </button>
        <button aria-label="Show desktop" className="ml-[8px] h-full w-[14px] border border-[#4a586a] bg-gradient-to-b from-[#9aa8b8] to-[#66788e]" />
      </div>
    </footer>
  );
}

/* ---------- window ---------- */

function WindowButton({ label, children }: { label: string; children: ReactNode }) {
  return (
    <button aria-label={label} className="flex h-[17px] w-[18px] items-center justify-center border-b-2 border-r-2 border-b-[#606060] border-r-[#606060] bg-[#f0f0f0]">
      <svg viewBox="0 0 12 12" className="h-3 w-3" fill="none" stroke="#000" strokeWidth="2">{children}</svg>
    </button>
  );
}

export default function App() {
  return (
    <div className="flex h-screen min-h-[640px] flex-col overflow-hidden bg-[#c0c0c0] text-black">
      <header className="flex h-[21px] shrink-0 items-center bg-gradient-to-r from-[#9ab5d5] to-[#b9d1ea] pl-[3px] pr-[2px] font-['DejaVu_Sans','Noto_Sans_CJK_SC',sans-serif] text-[12px]">
        <MillIcon className="h-4 w-4" />
        <h1 className="ml-1 truncate">Mastercam Mill v9.1 - \\172.16.0.118\学员文件共享\电脑课室三\肖老师\Mastercam\多面加工\18052209-P3.MC9</h1>
        <div className="ml-auto flex gap-px">
          <WindowButton label="Minimize"><path d="M2 10H8" /></WindowButton>
          <WindowButton label="Restore"><path d="M4 4V1.500H11V7H8M1 5.500H8V10.500H1Z" strokeWidth="1.500" /></WindowButton>
          <span className="w-px" />
          <WindowButton label="Close"><path d="M2 2 10 10M10 2 2 10" /></WindowButton>
        </div>
      </header>

      <div className="flex min-h-0 flex-1 flex-col border-b-2 border-r-2 border-t-2 border-white">
        <div className="h-px shrink-0 bg-[#808080]" />
        <div className="-mt-px shrink-0"><Toolbar /></div>
        <p className="flex h-5 shrink-0 items-center border-b border-[#696969] pl-[5px] font-['Liberation_Sans','Noto_Sans_CJK_SC',sans-serif] text-[17px] font-bold leading-none">刀具路径之相关设定:</p>
        <div className="flex min-h-0 flex-1">
          <SideMenu />
          <main className="relative min-w-0 flex-1 border-r border-[#808080] bg-black">
            <Model />
            <button aria-label="Status panel" className="absolute bottom-[10px] right-[1px] flex h-[15px] w-[30px] flex-col justify-between border-2 border-b-[#808080] border-l-white border-r-[#808080] border-t-white bg-[#c0c0c0] p-px pb-[2px]">
              <span className="h-[3px] w-[4px] bg-[#00e000]" />
              <span className="h-[2px] w-full border-b border-t border-b-white border-t-black" />
            </button>
          </main>
        </div>
        <div className="h-[38px] shrink-0 border-l-2 border-t-2 border-[#808080]" />
      </div>
      <div className="h-px shrink-0 bg-[#303c48]" />
      <Taskbar />
    </div>
  );
}
